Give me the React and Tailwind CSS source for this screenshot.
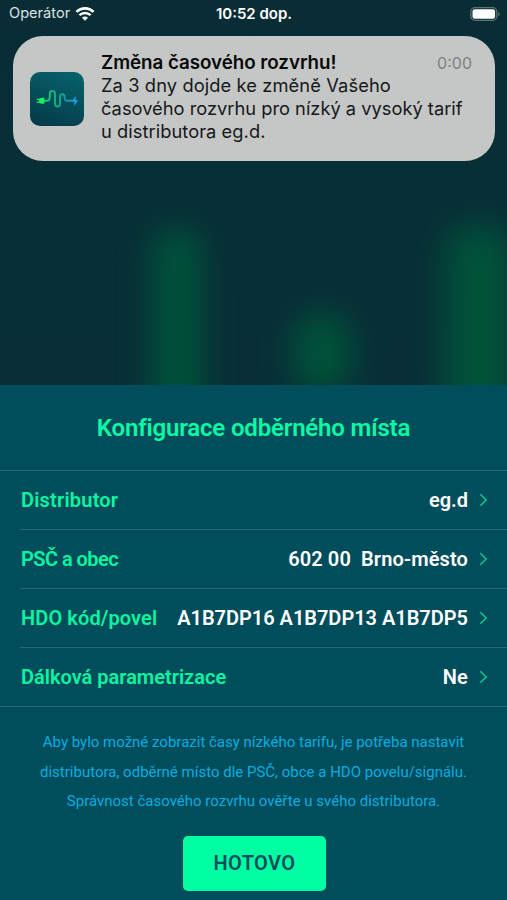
const rows = [
  { label: 'Distributor', value: 'eg.d', labelClass: 'tracking-[0.2px]', valueClass: '' },
  { label: 'PSČ a obec', value: '602 00\u00a0 Brno-město', labelClass: 'tracking-[-0.55px]', valueClass: 'tracking-[0.1px]' },
  { label: 'HDO kód/povel', value: 'A1B7DP16 A1B7DP13 A1B7DP5', labelClass: 'tracking-[0.1px]', valueClass: 'tracking-[-0.02px]' },
  { label: 'Dálková parametrizace', value: 'Ne', labelClass: '', valueClass: 'tracking-[0.2px]' },
];

function WifiIcon() {
  return (
    <svg width="20" height="14" viewBox="0 0 19 14" fill="none" stroke="#fff">
      <path d="M0.9 4.9C5.8.2 13.2.2 18.1 4.9" strokeWidth="2.6" />
      <path d="M3.9 8.2C7.1 5.2 11.9 5.2 15.1 8.2" strokeWidth="2.4" />
      <path d="M9.5 13.7 6.5 10.7C8.1 9.2 10.9 9.2 12.5 10.7Z" fill="#fff" stroke="none" />
    </svg>
  );
}

function BatteryIcon() {
  return (
    <svg width="31" height="14" viewBox="0 0 31 14" fill="none">
      <rect x="0.8" y="0.7" width="26" height="12.6" rx="4" stroke="#5a7470" strokeWidth="1.3" />
      <rect x="2.5" y="2.3" width="22.6" height="9.4" rx="2.2" fill="#fff" />
      <path d="M28.3 4.9C30.2 5.4 30.2 8.8 28.3 9.3Z" fill="#5a7470" />
    </svg>
  );
}

function Chevron() {
  return (
    <svg width="9" height="14" viewBox="0 0 9 14" fill="none" className="ml-[11px] shrink-0">
      <path d="M1.3 1.2 7.2 7 1.3 12.8" stroke="#0ec98c" strokeWidth="1.5" />
    </svg>
  );
}

// Plug on the left, wavy cable, lightning bolt on the right
function AppIcon() {
  return (
    <svg width="54" height="54" viewBox="0 0 54 54" fill="none" className="shrink-0">
      <defs>
        <linearGradient id="tile" x1="0.7" y1="0" x2="0.3" y2="1">
          <stop offset="0" stopColor="#066068" />
          <stop offset="1" stopColor="#043c4b" />
        </linearGradient>
        <linearGradient id="cable" x1="12" y1="0" x2="44" y2="0" gradientUnits="userSpaceOnUse">
          <stop offset="0" stopColor="#19d36b" />
          <stop offset="0.5" stopColor="#16a585" />
          <stop offset="1" stopColor="#1593c7" />
        </linearGradient>
      </defs>
      <rect width="54" height="54" rx="10" fill="url(#tile)" />
      <path
        d="M13 28.8H17C19.4 28.8 19.8 27.4 19.8 25V22C19.8 18.1 25.1 18.1 25.1 22V31.6C25.1 35.6 30 35.6 30 31.6V25C30 21.3 34.6 21.3 34.6 25C34.6 27.9 35.2 28.8 37.5 28.8H43"
        stroke="url(#cable)"
        strokeWidth="2"
      />
      <path d="M14.4 25.8V31.8H12C10.2 31.8 9 30.5 9 28.8S10.2 25.8 12 25.8Z" fill="#1df05e" />
      <path d="M6.8 27.4H10M6.8 30.2H10" stroke="#1df05e" strokeWidth="1.3" />
      <path d="M46 24 42 29.5H44.5L44.1 34L48 28.2H45.5Z" fill="#19a9ee" />
    </svg>
  );
}

function StatusBar() {
  return (
    <div className="grid h-7 grid-cols-3 items-center pl-[9px] pr-[6px] font-['Inter',sans-serif] text-white">
      <div className="flex items-center gap-[5px] text-[14.6px] text-[#dbe3e4]">
        <span>Operátor</span>
        <WifiIcon />
      </div>
      <span className="-ml-[2px] text-center text-[15px] font-semibold">10:52 dop.</span>
      <div className="flex justify-end">
        <BatteryIcon />
      </div>
    </div>
  );
}

function Notification() {
  return (
    <div className="mx-3 mt-2 ml-[13px] flex h-[125px] rounded-[30px] bg-[#c5c7c7] pl-[17px] pr-[23px] pt-[16px] font-['Inter',sans-serif] text-[#161819]">
      <div className="pt-[19.5px]">
        <AppIcon />
      </div>
      <div className="ml-[17px] flex-1">
        <div className="flex h-[22px] items-center justify-between">
          <span className="text-[18.8px] font-semibold tracking-[-0.05px] text-[#080909]">Změna časového rozvrhu!</span>
          <span className="text-[16px] text-[#7d8080]">0:00</span>
        </div>
        <p className="whitespace-nowrap text-[18.3px] leading-[23px]">
          <span className="tracking-[0.1px]">Za 3 dny dojde ke změně Vašeho</span>
          <br />
          časového rozvrhu pro nízký a vysoký tarif
          <br />
          <span className="tracking-[0.05px]">u distributora eg.d.</span>
        </p>
      </div>
    </div>
  );
}

function App() {
  return (
    <div className="flex h-[900px] w-[507px] flex-col bg-[#004d5c] font-['Roboto',sans-serif]">
      <div className="relative h-[385px] overflow-hidden bg-linear-to-b from-[#092c35] via-[#072f36] to-[#082f37]">
        {/* Blurred chart bars behind the banner */}
        <div className="absolute left-[153px] top-[230px] h-[220px] w-[48px] rounded-2xl bg-[#00543a] blur-[16px]" />
        <div className="absolute left-[294px] top-[314px] h-[78px] w-[56px] rounded-3xl bg-[#005438] blur-[16px]" />
        <div className="absolute left-[447px] top-[228px] h-[220px] w-[64px] rounded-2xl bg-[#005538] blur-[17px]" />
        <div className="relative">
          <StatusBar />
          <Notification />
        </div>
      </div>

      <h1 className="flex h-[86px] items-center justify-center border-b border-[#2a6875] text-[24px] font-semibold tracking-[-0.18px] text-[#0bfaa3]">
        Konfigurace odběrného místa
      </h1>

      <ul className="text-[20px] font-semibold">
        {rows.map((row, i) => (
          <li key={row.label} className={i === rows.length - 1 ? 'border-b border-[#2a6875]' : ''}>
            <div
              className={
                i === rows.length - 1
                  ? 'ml-5 flex h-[58px] items-center pr-[19px]'
                  : 'ml-5 flex h-[59px] items-center border-b border-[#2a6875] pr-[19px]'
              }
            >
              <span className={`ml-px text-[#0bf5a1] ${row.labelClass}`}>{row.label}</span>
              <span className={`ml-auto whitespace-pre text-white ${row.valueClass}`}>{row.value}</span>
              <Chevron />
            </div>
          </li>
        ))}
      </ul>

      <p className="mt-[21px] text-center text-[15px] leading-[29.7px] text-[#0aace0]">
        Aby bylo možné zobrazit časy nízkého tarifu, je potřeba nastavit
        <br />
        distributora, odběrné místo dle PSČ, obce a HDO povelu/signálu.
        <br />
        Správnost časového rozvrhu ověřte u svého distributora.
      </p>

      <button className="mt-[18.5px] ml-[183px] h-[55px] w-[143px] rounded-[5px] bg-[#00ffa3] text-[20px] font-semibold tracking-[0.4px] text-[#004d5c]">
        HOTOVO
      </button>
    </div>
  );
}

export default App;
